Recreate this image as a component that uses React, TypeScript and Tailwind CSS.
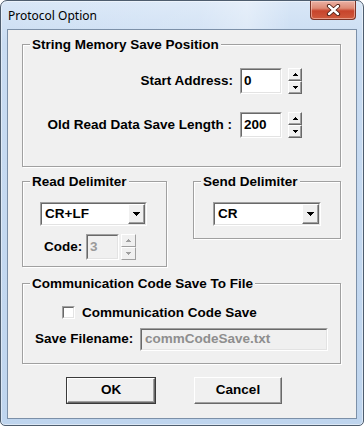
import React from "react";

function Tri({ up, color, big }: { up: boolean; color: string; big?: boolean }) {
  const rows = big ? [7, 5, 3, 1] : [5, 3, 1];
  const w = rows[0];
  const h = rows.length;
  const ordered = up ? [...rows].reverse() : rows;
  return (
    <svg width={w} height={h} viewBox={`0 0 ${w} ${h}`} shapeRendering="crispEdges">
      {ordered.map((len, i) => (
        <rect key={i} x={(w - len) / 2} y={i} width={len} height={1} fill={color} />
      ))}
    </svg>
  );
}

function Sunken({ className, inner, children }: { className: string; inner?: string; children?: React.ReactNode }) {
  return (
    <div className={`border border-t-[#a0a0a0] border-l-[#a0a0a0] border-r-white border-b-white ${className}`}>
      <div className={`h-full w-full border border-t-[#696969] border-l-[#696969] border-r-[#e3e3e3] border-b-[#e3e3e3] ${inner ?? ""}`}>
        {children}
      </div>
    </div>
  );
}

function SpinBtn({ up, disabled }: { up: boolean; disabled?: boolean }) {
  return (
    <div
      className={`flex-1 flex items-center justify-center bg-[#f0f0f0] border border-t-white border-l-white ${
        disabled ? "border-r-[#a0a0a0] border-b-[#a0a0a0]" : "border-r-[#696969] border-b-[#696969] shadow-[inset_-1px_-1px_0_#a0a0a0]"
      }`}
    >
      <Tri up={up} color={disabled ? "#a0a0a0" : "#000"} />
    </div>
  );
}

function Spinner({ className, disabled }: { className: string; disabled?: boolean }) {
  return (
    <div className={`flex flex-col ${className}`}>
      <SpinBtn up disabled={disabled} />
      <SpinBtn up={false} disabled={disabled} />
    </div>
  );
}

function Select({ value, className }: { value: string; className: string }) {
  return (
    <Sunken className={className} inner="bg-white flex items-stretch">
      <div className="flex-1 flex items-center pl-[3px] pt-[1px] text-black">{value}</div>
      <div className="w-[17px] flex items-center justify-center bg-[#f0f0f0] border border-t-white border-l-white border-r-[#696969] border-b-[#696969] shadow-[inset_-1px_-1px_0_#a0a0a0]">
        <Tri up={false} color="#000" big />
      </div>
    </Sunken>
  );
}

function Group({ label, className, children }: { label: string; className: string; children?: React.ReactNode }) {
  return (
    <div className={`relative border border-[#a0a0a0] shadow-[1px_1px_0_#ffffff,inset_1px_1px_0_#ffffff] ${className}`}>
      <span className="absolute left-[7px] top-[-8px] px-[2px] bg-[#f0f0f0] leading-[15px] whitespace-nowrap">{label}</span>
      {children}
    </div>
  );
}

function Button({ label, isDefault, className }: { label: string; isDefault?: boolean; className: string }) {
  const inner = (
    <div className="h-full w-full flex items-center justify-center bg-[#f0f0f0] border border-t-white border-l-white border-r-[#696969] border-b-[#696969] shadow-[inset_-1px_-1px_0_#a0a0a0]">
      {label}
    </div>
  );
  if (isDefault) {
    return <div className={`border border-[#3a3a3a] ${className}`}>{inner}</div>;
  }
  return <div className={className}>{inner}</div>;
}

export default function App() {
  return (
    <div className="w-[364px] h-[426px] rounded-t-[7px] rounded-b-[5px] border border-[#4e5d6e] bg-[linear-gradient(180deg,#d9e7f7_0%,#c9dcf2_10%,#bfd5ee_100%)] shadow-[inset_0_0_0_1px_rgba(255,255,255,0.45)] flex flex-col font-['Liberation_Sans',Arial,sans-serif] overflow-hidden">
      {/* Title bar */}
      <div className="h-[28px] flex items-start justify-between bg-[linear-gradient(90deg,rgba(255,255,255,0)_0%,rgba(255,255,255,0.15)_55%,rgba(255,255,255,0.35)_68%,rgba(255,255,255,0)_80%)]">
        <span className="self-center pl-[7px] pt-[1px] text-[12px] text-black font-['Noto_Sans',sans-serif] font-normal">Protocol Option</span>
        <div className="mr-[7px] w-[46px] h-[19px] rounded-b-[4px] border border-t-0 border-[#7a3326] bg-[linear-gradient(180deg,#eab1a4_0%,#de8a75_40%,#c7442c_55%,#cf5a3d_100%)] shadow-[inset_0_0_0_1px_rgba(255,220,210,0.5)] flex items-center justify-center">
          <svg width="15" height="12" viewBox="0 0 15 12">
            <path d="M3 2 L12 10 M12 2 L3 10" stroke="#4a1c12" strokeWidth="4.2" strokeLinecap="round" />
            <path d="M3 2 L12 10 M12 2 L3 10" stroke="#ffffff" strokeWidth="2.4" strokeLinecap="round" />
          </svg>
        </div>
      </div>

      {/* Client area */}
      <div className="mx-[6px] h-[390px] border border-[#7c90a8] bg-[#f0f0f0] pt-[14px] pl-[14px] pr-[15px] flex flex-col text-[13.5px] font-bold text-black">
        <Group label="String Memory Save Position" className="h-[123px] pt-[23px] flex flex-col gap-[18px]">
          <div className="flex items-center justify-end pr-[38px]">
            <span className="mr-[7px]">Start Address:</span>
            <Sunken className="w-[42px] h-[26px]" inner="bg-white flex items-center pl-[2px]">0</Sunken>
            <Spinner className="ml-[6px] w-[14px] h-[26px]" />
          </div>
          <div className="flex items-center justify-end pr-[38px]">
            <span className="mr-[8px]">Old Read Data Save Length :</span>
            <Sunken className="w-[42px] h-[26px]" inner="bg-white flex items-center pl-[2px]">200</Sunken>
            <Spinner className="ml-[6px] w-[14px] h-[26px]" />
          </div>
        </Group>

        <div className="mt-[14px] flex items-start">
          <Group label="Read Delimiter" className="w-[145px] h-[86px] pt-[20px] pl-[17px] flex flex-col">
            <Select value="CR+LF" className="w-[107px] h-[24px]" />
            <div className="mt-[8px] pl-[4px] flex items-center">
              <span className="w-[42px]">Code:</span>
              <Sunken className="w-[33px] h-[26px]" inner="bg-[#f0f0f0] flex items-center pl-[2px] text-[#9a9a9a]">3</Sunken>
              <Spinner className="ml-[2px] w-[15px] h-[26px]" disabled />
            </div>
          </Group>
          <Group label="Send Delimiter" className="ml-[26px] w-[148px] h-[58px] pt-[20px] pl-[19px]">
            <Select value="CR" className="w-[108px] h-[24px]" />
          </Group>
        </div>

        <Group label="Communication Code Save To File" className="mt-[16px] h-[81px] pt-[22px] flex flex-col">
          <div className="pl-[39px] h-[13px] flex items-center">
            <Sunken className="w-[13px] h-[13px]" inner="bg-white" />
            <span className="ml-[7px] leading-[15px]">Communication Code Save</span>
          </div>
          <div className="mt-[9px] pl-[12px] flex items-center">
            <span className="w-[105px]">Save Filename:</span>
            <Sunken className="w-[188px] h-[23px]" inner="bg-[#f0f0f0] flex items-center pl-[3px] text-[#8e8e8e]">commCodeSave.txt</Sunken>
          </div>
        </Group>

        <div className="mt-[13px] flex items-start">
          <Button label="OK" isDefault className="ml-[44px] w-[90px] h-[27px]" />
          <Button label="Cancel" className="ml-[38px] w-[88px] h-[27px]" />
        </div>
      </div>
    </div>
  );
}
